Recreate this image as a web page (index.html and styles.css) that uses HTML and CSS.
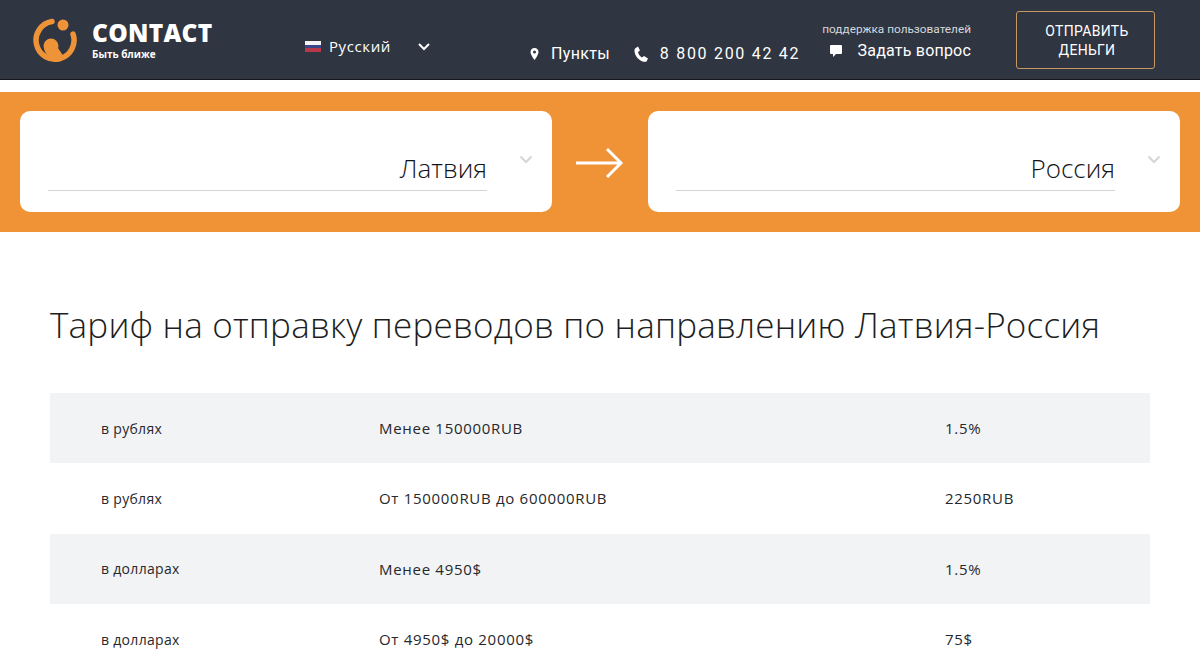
FILE: index.html
```html
<!DOCTYPE html>
<html lang="ru">
<head>
  <meta charset="UTF-8" />
  <title>CONTACT – Тарифы</title>
  <link rel="stylesheet" href="styles.css">
</head>
<body>
  <header class="topbar">
    <a class="logo" href="#">
      <svg class="logo-mark" width="46" height="46" viewBox="0 0 46 46">
        <path d="M19 4.500A19 19 0 1 0 40 17" fill="none" stroke="#ee9337" stroke-width="5.500" stroke-linecap="round"/>
        <circle cx="30" cy="8" r="5.500" fill="#ee9337"/>
        <circle cx="18" cy="29" r="7.500" fill="#ee9337"/>
        <path d="M11 31C12 38 18 42 22 42L31 40L25 31Z" fill="#ee9337"/>
      </svg>
      <span class="logo-text">
        <span class="logo-name">CONTACT</span>
        <span class="logo-slogan">Быть ближе</span>
      </span>
    </a>
    <div class="lang">
      <span class="flag"></span>
      <span class="lang-name">Русский</span>
      <svg class="lang-arrow" width="14" height="9" viewBox="0 0 14 9"><path d="M2 2l5 5 5-5" fill="none" stroke="#fff" stroke-width="2"/></svg>
    </div>
    <nav class="top-links">
      <a class="top-link points" href="#">
        <svg width="9" height="12" viewBox="0 0 9 12"><path d="M4.500 0C2 0 .5 1.800.5 4c0 3 4 8 4 8s4-5 4-8C8.500 1.800 7 0 4.500 0zm0 5.500a1.500 1.500 0 1 1 0-3 1.500 1.500 0 0 1 0 3z" fill="#fff"/></svg>
        Пункты
      </a>
      <a class="top-link phone" href="#">
        <svg width="15" height="16" viewBox="0 0 15 16"><path d="M1 2.500L4 .5l2 4-2 1.500c.5 2.500 2 4.500 4 5.500l2-1.500 4 2.500-1.500 3c-1 .5-3 .5-5-.5C4 13.500.5 9 .5 5c0-1 .2-2 .5-2.500z" fill="#fff"/></svg>
        8 800 200 42 42
      </a>
      <div class="support">
        <span class="support-title">поддержка пользователей</span>
        <a class="top-link ask" href="#">
          <svg width="12" height="12" viewBox="0 0 12 12"><path d="M1 0h10a1 1 0 0 1 1 1v7a1 1 0 0 1-1 1H6l-3 3V9H1a1 1 0 0 1-1-1V1a1 1 0 0 1 1-1z" fill="#fff"/></svg>
          Задать вопрос
        </a>
      </div>
    </nav>
    <a class="send-btn" href="#">ОТПРАВИТЬ<br>ДЕНЬГИ</a>
  </header>

  <section class="direction">
    <div class="select-card">
      <div class="select-value">Латвия</div>
      <svg class="select-arrow" width="14" height="9" viewBox="0 0 14 9"><path d="M1.500 1.500L7 7l5.500-5.500" fill="none" stroke="#d4d5d8" stroke-width="2"/></svg>
    </div>
    <svg class="dir-arrow" width="50" height="32" viewBox="0 0 50 32"><path d="M1 16h45M32 2l14 14-14 14" fill="none" stroke="#fff" stroke-width="3"/></svg>
    <div class="select-card">
      <div class="select-value">Россия</div>
      <svg class="select-arrow" width="14" height="9" viewBox="0 0 14 9"><path d="M1.500 1.500L7 7l5.500-5.500" fill="none" stroke="#d4d5d8" stroke-width="2"/></svg>
    </div>
  </section>

  <main class="tariffs">
    <h1>Тариф на отправку переводов по направлению Латвия-Россия</h1>
    <div class="tariff-table">
      <div class="tariff-row"><span>в рублях</span><span class="num">Менее 150000RUB</span><span class="num">1.5%</span></div>
      <div class="tariff-row"><span>в рублях</span><span class="num">От 150000RUB до 600000RUB</span><span class="num">2250RUB</span></div>
      <div class="tariff-row"><span>в долларах</span><span class="num">Менее 4950$</span><span class="num">1.5%</span></div>
      <div class="tariff-row"><span>в долларах</span><span class="num">От 4950$ до 20000$</span><span class="num">75$</span></div>
    </div>
  </main>
</body>
</html>
```
FILE: styles.css
```css
html, body {
  margin: 0;
  padding: 0;
  height: 100%;
  overflow: hidden;
  background: #fff;
}
body {
  font-family: 'Open Sans', 'Noto Sans', sans-serif;
  color: #26282c;
}
a {
  color: #fff;
  text-decoration: none;
}
.topbar {
  height: 79px;
  background: #2f3541;
  border-bottom: 1px solid #15171c;
  display: flex;
  align-items: center;
  padding: 0 45px 0 33px;
  color: #fff;
  white-space: nowrap;
}
.topbar > * {
  flex: none;
}
.logo {
  display: flex;
  align-items: center;
  gap: 13px;
  width: 272px;
}
.logo-text {
  display: flex;
  flex-direction: column;
  margin-top: 1px;
}
.logo-name {
  font-size: 24.500px;
  font-weight: 800;
  line-height: 28px;
  letter-spacing: .3px;
}
.logo-slogan {
  font-size: 10px;
  font-weight: 700;
  line-height: 14px;
}
.lang {
  display: flex;
  align-items: center;
  font-size: 15px;
  letter-spacing: .6px;
  margin-top: 13px;
}
.flag {
  width: 16px;
  height: 11px;
  margin-right: 8px;
  background: linear-gradient(#f4f4f6 33%, #39478a 33%, #39478a 66%, #b8384c 66%);
}
.lang-arrow {
  margin-left: 26px;
}
.top-links {
  display: flex;
  align-items: flex-end;
  height: 48px;
  margin-left: auto;
  margin-right: 45px;
  font-family: Roboto, 'Open Sans', sans-serif;
}
.top-link {
  display: flex;
  align-items: center;
  font-size: 16px;
  letter-spacing: .6px;
  line-height: 20px;
}
.points {
  gap: 12px;
  margin-right: 24px;
  letter-spacing: .3px;
}
.phone {
  gap: 11px;
  margin-right: 22px;
  letter-spacing: 1.700px;
}
.support {
  display: flex;
  flex-direction: column;
  align-items: flex-end;
  gap: 4px;
  margin-bottom: 3px;
}
.support-title {
  font-size: 11.800px;
  line-height: 16px;
  color: #d5d7db;
}
.ask {
  gap: 16px;
  letter-spacing: .2px;
}
.send-btn {
  width: 134px;
  height: 54px;
  padding: 2px 0 0 3px;
  border: 1px solid #c9985e;
  border-radius: 3px;
  margin-top: 1px;
  display: flex;
  align-items: center;
  justify-content: center;
  text-align: center;
  font-family: Roboto, 'Open Sans', sans-serif;
  font-size: 14px;
  line-height: 19px;
  letter-spacing: .3px;
}
.direction {
  margin-top: 12px;
  height: 140px;
  box-sizing: border-box;
  padding: 0 20px 1px;
  background: #ef9336;
  display: flex;
  align-items: center;
  justify-content: space-between;
}
.dir-arrow {
  margin-top: 3px;
}
.select-card {
  position: relative;
  width: 532px;
  height: 101px;
  background: #fff;
  border-radius: 10px;
  box-sizing: border-box;
  padding: 38px 65px 0 28px;
}
.select-value {
  font-size: 26px;
  font-weight: 300;
  line-height: 39px;
  padding-bottom: 2px;
  text-align: right;
  color: #131417;
  border-bottom: 1px solid #d4d5d8;
}
.select-arrow {
  position: absolute;
  right: 19px;
  top: 44px;
}
.tariffs {
  padding: 0 50px;
}
h1 {
  font-size: 35px;
  font-weight: 300;
  line-height: 48px;
  letter-spacing: .22px;
  margin: 69px 0 44px;
  color: #1c1e22;
  white-space: nowrap;
}
.tariff-row {
  display: grid;
  grid-template-columns: 278px 566px 1fr;
  height: 70.300px;
  align-items: center;
  padding-left: 51px;
  font-size: 14px;
  letter-spacing: .3px;
}
.tariff-row:nth-child(odd) {
  background: #f2f3f5;
}
.num {
  font-size: 15px;
  letter-spacing: .7px;
}
```
